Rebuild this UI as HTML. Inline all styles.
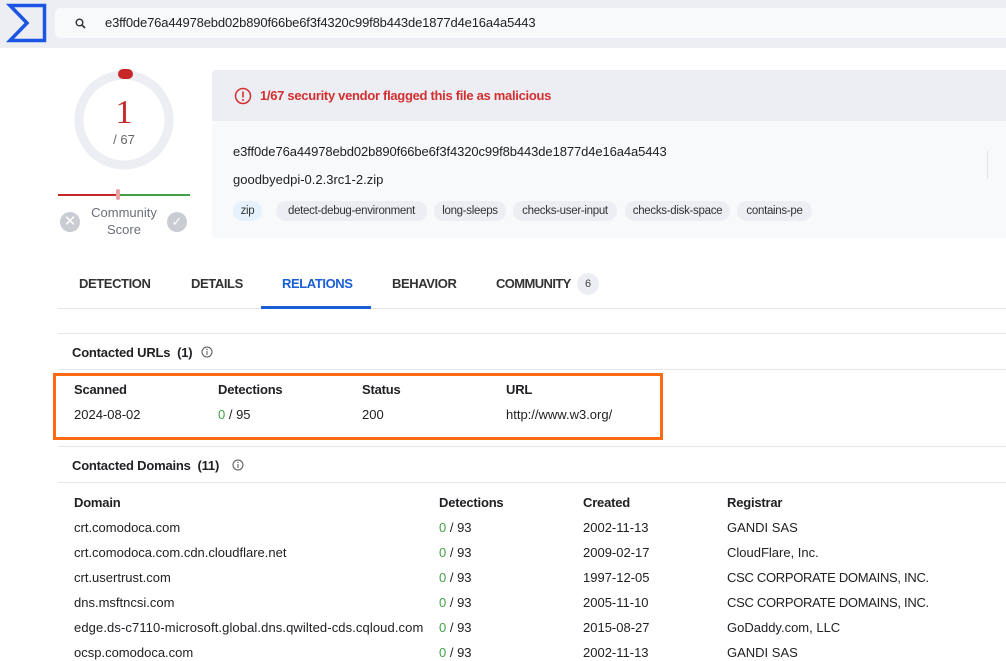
<!DOCTYPE html>
<html><head><style>
*{margin:0;padding:0;box-sizing:border-box}
body{width:1006px;height:661px;overflow:hidden;background:#fff;font-family:"Liberation Sans",sans-serif;color:#202124;font-size:13px;position:relative}
.a{position:absolute;white-space:nowrap}
.b{font-weight:bold;letter-spacing:-0.2px}
.hr{position:absolute;left:58px;right:0;height:1px;background:#e5e7ec}
.tag{position:absolute;top:201px;height:20px;line-height:20px;border-radius:10px;background:#eceef3;font-size:11.5px;color:#333;text-align:center;letter-spacing:-0.3px}
.g{color:#43a047}
.t{letter-spacing:-0.4px}
</style></head><body>
<div class="a" style="left:0;top:0;width:1006px;height:48px;background:#eceef3"></div>
<svg class="a" style="left:6px;top:3px" width="41" height="40" viewBox="0 0 41 40"><path d="M4 2.5H38.5V37.5H4L21 20Z" fill="none" stroke="#1a55e3" stroke-width="3.5" stroke-linejoin="miter"/></svg>
<div class="a" style="left:55px;top:8px;width:951px;height:30px;background:#f8f9fb;border-radius:6px 0 0 6px"></div>
<svg class="a" style="left:75px;top:18px" width="11" height="11" viewBox="0 0 11 11"><circle cx="4.5" cy="4.5" r="3.3" fill="none" stroke="#333" stroke-width="1.4"/><path d="M7 7L10 10" stroke="#333" stroke-width="1.6"/></svg>
<div class="a" style="left:105px;top:15px;font-size:13px;color:#222;letter-spacing:-0.15px">e3ff0de76a44978ebd02b890f66be6f3f4320c99f8b443de1877d4e16a4a5443</div>

<svg class="a" style="left:70px;top:66px" width="110" height="110"><circle cx="54" cy="54" r="45" fill="none" stroke="#eceef3" stroke-width="9"/><rect x="48" y="3" width="15" height="10" rx="5" fill="#c62828"/></svg>
<div class="a" style="left:74px;width:100px;top:94px;text-align:center;font-family:'Liberation Serif',serif;font-size:34px;color:#c62828">1</div>
<div class="a" style="left:74px;width:100px;top:132px;text-align:center;font-size:13px;color:#666">/ 67</div>
<div class="a" style="left:58px;top:194px;width:60px;height:2px;background:#c62828"></div>
<div class="a" style="left:118px;top:194px;width:72px;height:2px;background:#43a047"></div>
<div class="a" style="left:116px;top:189px;width:4px;height:11px;background:#eba0a4;border-radius:2px"></div>
<div class="a" style="left:60px;top:212px;width:20px;height:20px;border-radius:50%;background:#c9ccd3;color:#fff;text-align:center;line-height:20px;font-size:15px">✕</div>
<div class="a" style="left:167px;top:212px;width:20px;height:20px;border-radius:50%;background:#c9ccd3;color:#fff;text-align:center;line-height:20px;font-size:13px">✓</div>
<div class="a" style="left:74px;width:100px;top:204px;text-align:center;font-size:13px;color:#6b6f78;line-height:17px">Community<br>Score</div>

<div class="a" style="left:212px;top:70px;width:794px;height:168px;background:#f8f9fb;border-radius:4px 0 0 4px"></div>
<div class="a" style="left:212px;top:70px;width:794px;height:51px;background:#eceef3;border-radius:4px 0 0 0"></div>
<svg class="a" style="left:234px;top:87px" width="18" height="18" viewBox="0 0 18 18"><circle cx="9" cy="9" r="7.5" fill="none" stroke="#d32f2f" stroke-width="1.5"/><path d="M9 4.5V10.5" stroke="#d32f2f" stroke-width="1.6"/><circle cx="9" cy="13" r="1" fill="#d32f2f"/></svg>
<div class="a b" style="left:260px;top:88px;font-size:13px;color:#d32f2f;letter-spacing:-0.3px">1/67 security vendor flagged this file as malicious</div>
<div class="a" style="left:233px;top:144px;font-size:13px;letter-spacing:-0.1px">e3ff0de76a44978ebd02b890f66be6f3f4320c99f8b443de1877d4e16a4a5443</div>
<div class="a" style="left:233px;top:172px;font-size:13px">goodbyedpi-0.2.3rc1-2.zip</div>
<div class="a" style="left:987px;top:151px;width:1px;height:28px;background:#e0e2e7"></div>
<div class="tag" style="left:233px;width:29px;background:#e5f1fd">zip</div>
<div class="tag" style="left:276px;width:151px">detect-debug-environment</div>
<div class="tag" style="left:434px;width:72px">long-sleeps</div>
<div class="tag" style="left:513px;width:104px">checks-user-input</div>
<div class="tag" style="left:625px;width:105px">checks-disk-space</div>
<div class="tag" style="left:737px;width:75px">contains-pe</div>

<div class="a b t" style="left:79px;top:276px;color:#333">DETECTION</div>
<div class="a b t" style="left:191px;top:276px;color:#333">DETAILS</div>
<div class="a b t" style="left:282px;top:276px;color:#1a5fd6">RELATIONS</div>
<div class="a b t" style="left:392px;top:276px;color:#333">BEHAVIOR</div>
<div class="a b t" style="left:496px;top:276px;color:#333;letter-spacing:-0.6px">COMMUNITY</div>
<div class="a" style="left:577px;top:273px;width:22px;height:22px;border-radius:50%;background:#eceef3;text-align:center;line-height:22px;font-size:11px;color:#444">6</div>
<div class="hr" style="top:308px"></div>
<div class="a" style="left:261px;top:306px;width:110px;height:3px;background:#1a5fd6"></div>

<div class="hr" style="top:333px"></div>
<div class="a b" style="left:72px;top:345px">Contacted URLs&nbsp; (1)</div>
<svg class="a" style="left:201px;top:346px" width="12" height="12"><circle cx="6" cy="6" r="5" fill="none" stroke="#555"/><path d="M6 5V9" stroke="#555"/><circle cx="6" cy="3.4" r=".7" fill="#555"/></svg>
<div class="hr" style="top:369px"></div>
<div class="a b" style="left:74px;top:382px">Scanned</div>
<div class="a b" style="left:218px;top:382px">Detections</div>
<div class="a b" style="left:362px;top:382px">Status</div>
<div class="a b" style="left:506px;top:382px">URL</div>
<div class="a" style="left:74px;top:407px">2024-08-02</div>
<div class="a" style="left:218px;top:407px"><span class="g">0</span> / 95</div>
<div class="a" style="left:362px;top:407px">200</div>
<div class="a" style="left:506px;top:407px">http://www.w3.org/</div>
<div class="a" style="left:53px;top:373px;width:610px;height:67px;border:3px solid #ff6a13"></div>
<div class="hr" style="top:446px"></div>
<div class="a b" style="left:72px;top:458px">Contacted Domains&nbsp; (11)</div>
<svg class="a" style="left:232px;top:459px" width="12" height="12"><circle cx="6" cy="6" r="5" fill="none" stroke="#555"/><path d="M6 5V9" stroke="#555"/><circle cx="6" cy="3.4" r=".7" fill="#555"/></svg>
<div class="hr" style="top:482px"></div>
<div class="a b" style="left:74px;top:495px">Domain</div>
<div class="a b" style="left:439px;top:495px">Detections</div>
<div class="a b" style="left:583px;top:495px">Created</div>
<div class="a b" style="left:727px;top:495px">Registrar</div>

<div class="a" style="left:74px;top:520px">crt.comodoca.com</div><div class="a" style="left:439px;top:520px"><span class="g">0</span> / 93</div><div class="a" style="left:583px;top:520px">2002-11-13</div><div class="a" style="left:727px;top:520px">GANDI SAS</div>
<div class="a" style="left:74px;top:545px">crt.comodoca.com.cdn.cloudflare.net</div><div class="a" style="left:439px;top:545px"><span class="g">0</span> / 93</div><div class="a" style="left:583px;top:545px">2009-02-17</div><div class="a" style="left:727px;top:545px">CloudFlare, Inc.</div>
<div class="a" style="left:74px;top:570px">crt.usertrust.com</div><div class="a" style="left:439px;top:570px"><span class="g">0</span> / 93</div><div class="a" style="left:583px;top:570px">1997-12-05</div><div class="a" style="left:727px;top:570px;letter-spacing:-0.3px">CSC CORPORATE DOMAINS, INC.</div>
<div class="a" style="left:74px;top:595px">dns.msftncsi.com</div><div class="a" style="left:439px;top:595px"><span class="g">0</span> / 93</div><div class="a" style="left:583px;top:595px">2005-11-10</div><div class="a" style="left:727px;top:595px;letter-spacing:-0.3px">CSC CORPORATE DOMAINS, INC.</div>
<div class="a" style="left:74px;top:620px;letter-spacing:0.1px">edge.ds-c7110-microsoft.global.dns.qwilted-cds.cqloud.com</div><div class="a" style="left:439px;top:620px"><span class="g">0</span> / 93</div><div class="a" style="left:583px;top:620px">2015-08-27</div><div class="a" style="left:727px;top:620px">GoDaddy.com, LLC</div>
<div class="a" style="left:74px;top:645px">ocsp.comodoca.com</div><div class="a" style="left:439px;top:645px"><span class="g">0</span> / 93</div><div class="a" style="left:583px;top:645px">2002-11-13</div><div class="a" style="left:727px;top:645px">GANDI SAS</div>
</body></html>
